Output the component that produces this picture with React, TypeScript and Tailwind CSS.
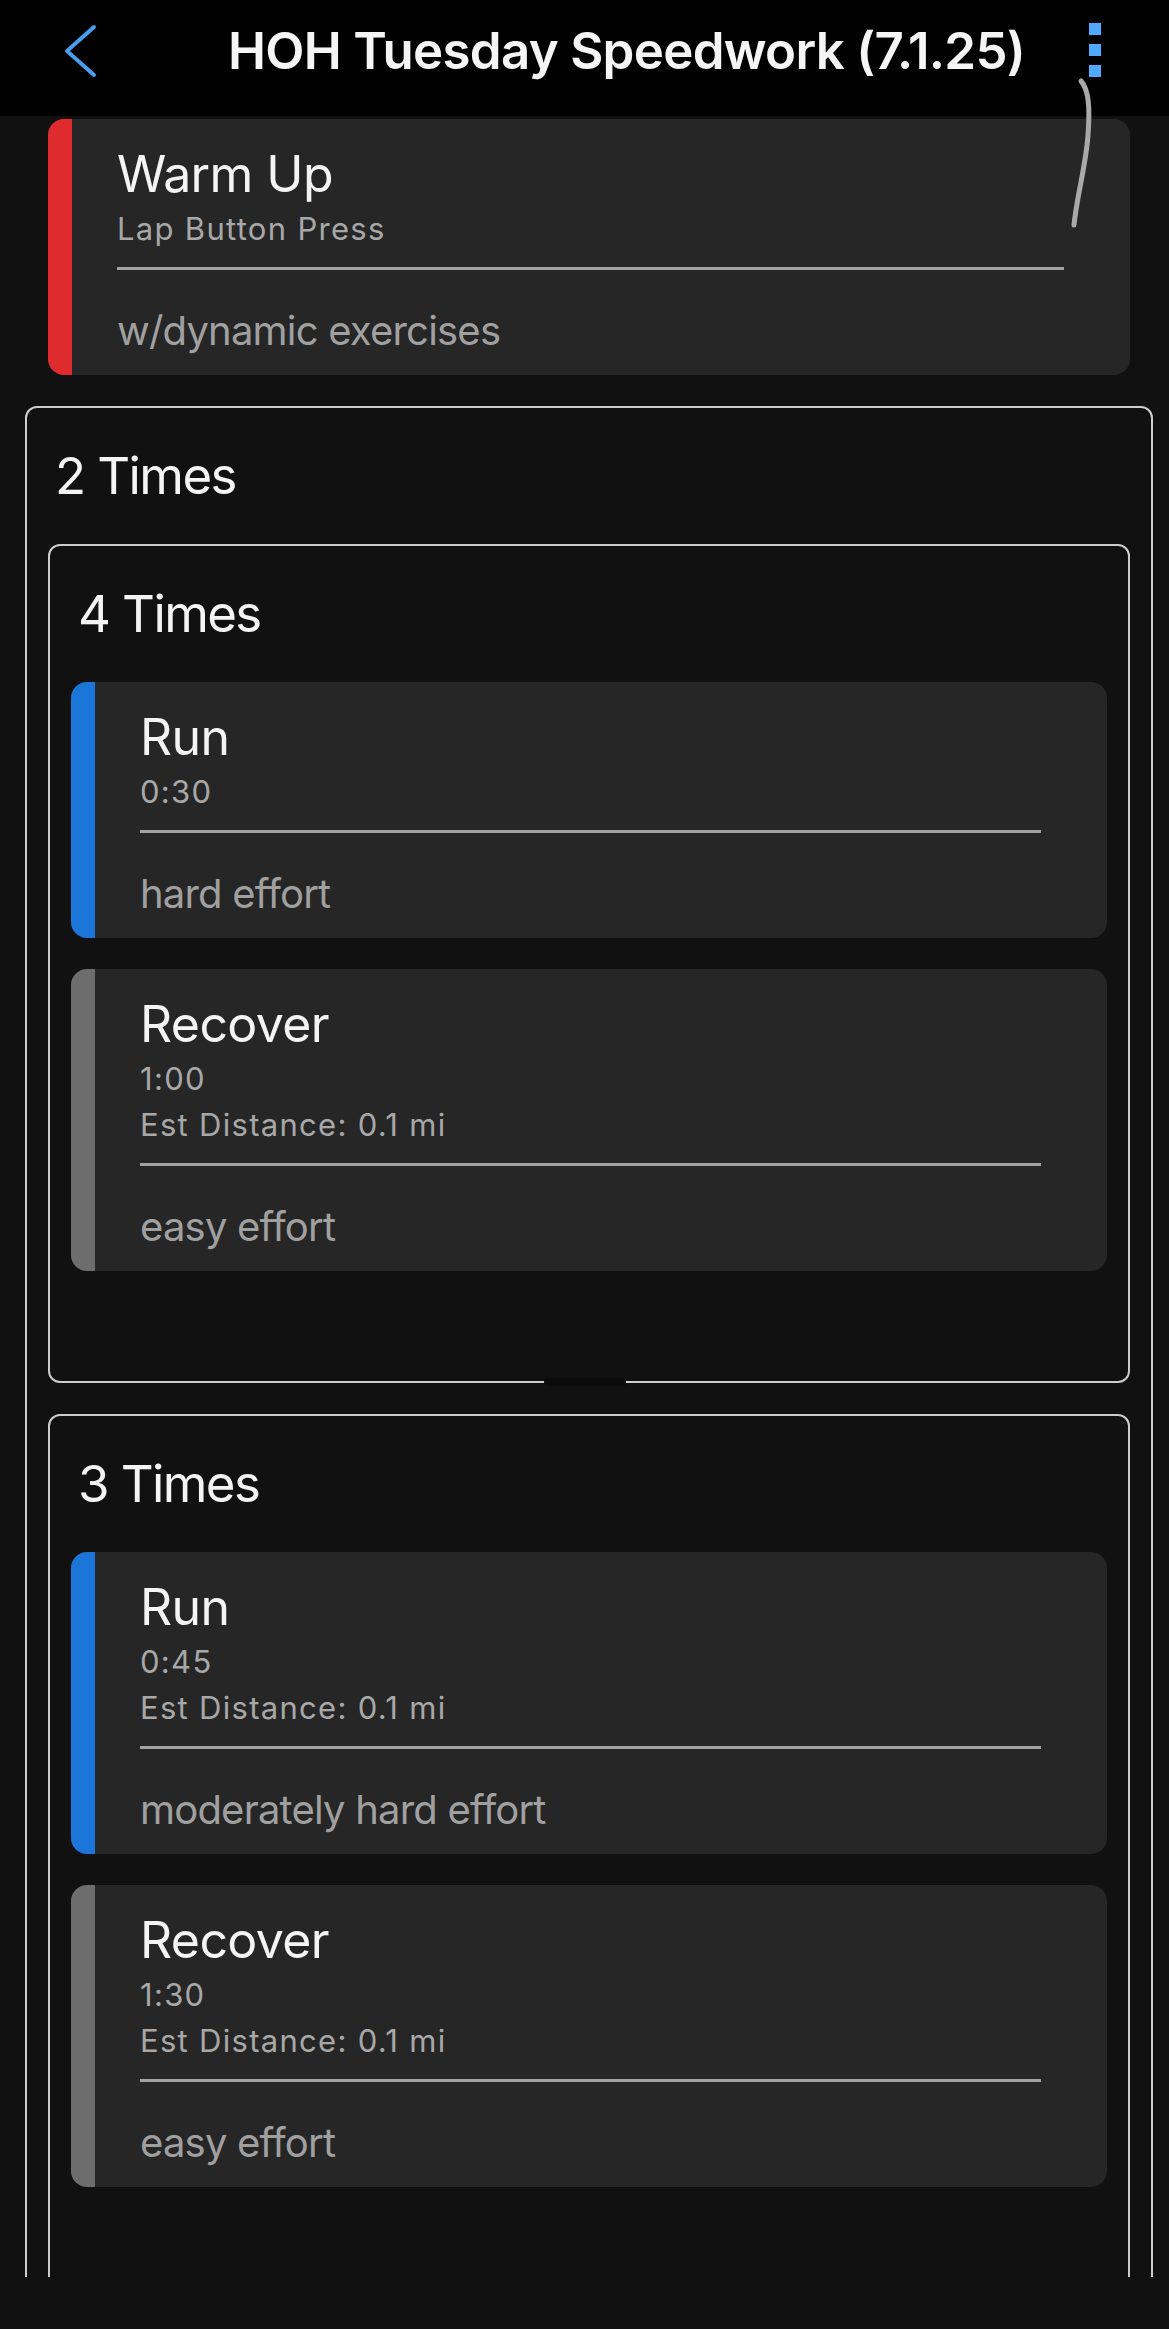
import React from "react";

type Step = {
  title: string;
  lines: string[];
  note: string;
  stripe: string;
};

function StepCard({ step }: { step: Step }) {
  return (
    <div className="flex rounded-[16px] overflow-hidden bg-[#262626]">
      <div className={`w-[24px] shrink-0 ${step.stripe}`} />
      <div className="flex-1 pl-[45px] pr-[66px] pt-[25px] pb-[20px]">
        <div className="text-[50px] leading-[60px] text-[#f4f4f4] mb-[2px] tracking-[-0.6px]">{step.title}</div>
        {step.lines.map((l) => (
          <div key={l} className="text-[31px] leading-[46px] text-[#a8a8a8] tracking-[1.3px]">
            {l}
          </div>
        ))}
        <div className="h-[3px] bg-[#a2a2a2] mt-[15px]" />
        <div className="text-[40px] leading-[48px] text-[#a0a0a0] mt-[37px] tracking-[-0.8px]">{step.note}</div>
      </div>
    </div>
  );
}

function RepeatBox({
  label,
  children,
  pb,
  blob,
}: {
  label: string;
  children: React.ReactNode;
  pb: string;
  blob?: boolean;
}) {
  return (
    <div className={`relative border-2 border-[#cdcdcd] rounded-[12px] px-[21px] pt-[37px] ${pb}`}>
      <div className="ml-[7px] text-[51px] leading-[62px] text-[#f4f4f4] mb-[37px] tracking-[-1.6px]">{label}</div>
      <div className="flex flex-col gap-[31px]">{children}</div>
      {blob && (
        <div className="absolute bottom-[-5px] left-[494px] w-[82px] h-[8px] rounded-full bg-[#0b0b0b]" />
      )}
    </div>
  );
}

const blue = "bg-[#1c75d8]";
const gray = "bg-[#6d6d6d]";

export default function App() {
  return (
    <div className="relative w-[1169px] h-[2329px] overflow-hidden bg-[#111111] font-['Inter','Noto_Sans',sans-serif]">
      <header className="h-[116px] bg-black flex items-start">
        <div className="ml-[63px] mt-[24px] w-[34px] h-[54px]">
          <svg width="34" height="54" viewBox="0 0 34 54" fill="none">
            <polyline
              points="31,3 4,27 31,51"
              stroke="#4a9cec"
              strokeWidth="4"
              strokeLinecap="round"
              strokeLinejoin="round"
            />
          </svg>
        </div>
        <div className="ml-[131px] mt-[20px] text-[51px] leading-[62px] font-semibold text-[#f5f5f5] tracking-[-0.7px] whitespace-nowrap">
          HOH Tuesday Speedwork (7.1.25)
        </div>
        <div className="ml-auto mr-[68px] mt-[23px] flex flex-col gap-[9px]">
          <div className="w-[12px] h-[12px] bg-[#51a8ff]" />
          <div className="w-[12px] h-[12px] bg-[#51a8ff]" />
          <div className="w-[12px] h-[12px] bg-[#51a8ff]" />
        </div>
      </header>

      <main className="h-[2161px] overflow-hidden pt-[3px] pl-[25px] pr-[16px]">
        <div className="mx-[23px]">
          <StepCard
            step={{
              title: "Warm Up",
              lines: ["Lap Button Press"],
              note: "w/dynamic exercises",
              stripe: "bg-[#e02b2e]",
            }}
          />
        </div>

        <div className="mt-[31px]">
          <RepeatBox label="2 Times" pb="pb-[110px]">
            <RepeatBox label="4 Times" pb="pb-[110px]" blob>
              <StepCard step={{ title: "Run", lines: ["0:30"], note: "hard effort", stripe: blue }} />
              <StepCard
                step={{
                  title: "Recover",
                  lines: ["1:00", "Est Distance: 0.1 mi"],
                  note: "easy effort",
                  stripe: gray,
                }}
              />
            </RepeatBox>
            <RepeatBox label="3 Times" pb="pb-[110px]">
              <StepCard
                step={{
                  title: "Run",
                  lines: ["0:45", "Est Distance: 0.1 mi"],
                  note: "moderately hard effort",
                  stripe: blue,
                }}
              />
              <StepCard
                step={{
                  title: "Recover",
                  lines: ["1:30", "Est Distance: 0.1 mi"],
                  note: "easy effort",
                  stripe: gray,
                }}
              />
            </RepeatBox>
          </RepeatBox>
        </div>
      </main>

      <svg className="absolute left-0 top-0 pointer-events-none" width="1169" height="260" viewBox="0 0 1169 260">
        <path
          d="M1081 81 C1089 90, 1090 108, 1088 135 C1086 165, 1077 195, 1074 225"
          stroke="#a9a9a9"
          strokeWidth="5"
          fill="none"
          strokeLinecap="round"
        />
      </svg>
    </div>
  );
}
